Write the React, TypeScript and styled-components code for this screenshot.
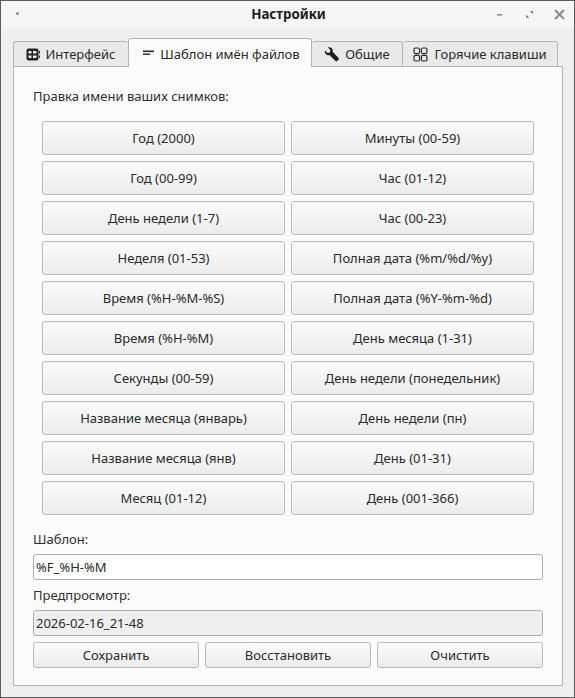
import { FC, ReactNode } from "react";
import styled, { createGlobalStyle } from "styled-components";

const GlobalStyle = createGlobalStyle`
  html, body {
    margin: 0;
    padding: 0;
    background: #efefef;
  }
  * {
    box-sizing: border-box;
  }
`;

const Window = styled.div`
  width: 575px;
  height: 698px;
  display: flex;
  flex-direction: column;
  background: #efefef;
  border: 1px solid #5c5c5c;
  font-family: "Noto Sans", sans-serif;
  font-size: 13px;
  color: #232323;
`;

const TitleBar = styled.div`
  height: 26px;
  flex: none;
  display: grid;
  grid-template-columns: 1fr auto 1fr;
  align-items: center;
  background: #f6f6f6;
  padding: 0 9px 0 12px;
`;

const Title = styled.div`
  font-size: 13.3px;
  font-weight: 700;
  color: #1c1c1c;
  margin-right: 1px;
`;

const MenuDot = styled.div`
  width: 3px;
  height: 3px;
  border-radius: 50%;
  background: #8a8a8a;
  justify-self: start;
  margin-left: 3px;
  margin-bottom: 2px;
`;

const WindowControls = styled.div`
  justify-self: end;
  display: flex;
  align-items: center;
  gap: 20px;
  color: #8c8c8c;
`;

const Body = styled.div`
  flex: 1;
  display: flex;
  flex-direction: column;
  padding: 11px 12px 11px 12px;
  min-height: 0;
`;

const TabBar = styled.div`
  height: 29px;
  flex: none;
  display: flex;
  align-items: flex-end;
  position: relative;
  z-index: 1;
  margin-bottom: -1px;
`;

const Tab = styled.div<{ $active?: boolean; $w: number }>`
  width: ${(p) => p.$w}px;
  height: ${(p) => (p.$active ? 29 : 26)}px;
  display: flex;
  align-items: center;
  justify-content: center;
  gap: 5px;
  white-space: nowrap;
  padding-top: ${(p) => (p.$active ? 1 : 0)}px;
  padding-left: ${(p) => (p.$active ? 2 : 0)}px;
  background: ${(p) => (p.$active ? "#fbfbfb" : "#e9e9e9")};
  border: 1px solid #b4b4b4;
  border-bottom: ${(p) => (p.$active ? "none" : "1px solid #b4b4b4")};
  border-left: ${(p) => (p.$active ? "1px solid #b4b4b4" : "none")};
  border-radius: 3px 3px 0 0;
  color: #2a2a2a;
  &:first-child {
    border-right: none;
    border-left: 1px solid #b4b4b4;
  }
`;

const Pane = styled.div`
  flex: 1;
  width: 550px;
  display: flex;
  flex-direction: column;
  background: #fbfbfb;
  border: 1px solid #b4b4b4;
  padding: 20px 19px 17px 19px;
`;

const Label = styled.div`
  height: 18px;
  line-height: 18px;
  color: #2f2f2f;
`;

const KeyGrid = styled.div`
  display: grid;
  grid-template-columns: 243px 243px;
  grid-auto-rows: 34px;
  column-gap: 6px;
  row-gap: 6px;
  padding-left: 9px;
  margin-top: 16px;
  margin-bottom: 15px;
`;

const Button = styled.button<{ $small?: boolean }>`
  height: ${(p) => (p.$small ? 26 : 34)}px;
  min-width: 0;
  padding: 0;
  font-family: inherit;
  font-size: 13px;
  color: #2a2a2a;
  background: linear-gradient(#fbfbfb, #ececec);
  border: 1px solid #b9b9b9;
  border-radius: 3px;
`;

const TextInput = styled.div<{ $readOnly?: boolean }>`
  height: 26px;
  margin-top: 6px;
  padding-left: 2px;
  display: flex;
  align-items: center;
  background: ${(p) => (p.$readOnly ? "#efefef" : "#ffffff")};
  border: 1px solid #adadad;
  border-radius: 3px;
  color: #2a2a2a;
`;

const PreviewLabel = styled(Label)`
  margin-top: 6px;
`;

const Actions = styled.div`
  display: grid;
  grid-template-columns: repeat(3, 166px);
  column-gap: 6px;
  margin-top: 6px;
`;

const leftKeys = [
  "Год (2000)",
  "Год (00-99)",
  "День недели (1-7)",
  "Неделя (01-53)",
  "Время (%H-%M-%S)",
  "Время (%H-%M)",
  "Секунды (00-59)",
  "Название месяца (январь)",
  "Название месяца (янв)",
  "Месяц (01-12)",
];

const rightKeys = [
  "Минуты (00-59)",
  "Час (01-12)",
  "Час (00-23)",
  "Полная дата (%m/%d/%y)",
  "Полная дата (%Y-%m-%d)",
  "День месяца (1-31)",
  "День недели (понедельник)",
  "День недели (пн)",
  "День (01-31)",
  "День (001-366)",
];

const InterfaceIcon = () => (
  <svg width="14" height="13" viewBox="0 0 14 13">
    <rect x="0.5" y="0.5" width="12" height="12" rx="2" fill="#262626" />
    <rect x="2.500" y="3" width="3" height="2.500" fill="#e9e9e9" />
    <rect x="7" y="3" width="3.500" height="2.500" fill="#e9e9e9" />
    <rect x="2.500" y="7.500" width="3" height="2.500" fill="#e9e9e9" />
    <rect x="7" y="7.500" width="3.500" height="2.500" fill="#e9e9e9" />
    <rect x="13" y="3" width="1" height="2.500" fill="#262626" />
    <rect x="13" y="7.500" width="1" height="2.500" fill="#262626" />
  </svg>
);

const TemplateIcon = () => (
  <svg width="13" height="13" viewBox="0 0 13 13">
    <rect x="1" y="3.500" width="11" height="1.600" fill="#2b2b2b" />
    <rect x="1" y="6.500" width="7" height="1.400" fill="#2b2b2b" />
  </svg>
);

const WrenchIcon = () => (
  <svg width="16" height="15" viewBox="0 0 16 15">
    <path
      d="M1 3.600 3.400 6 5.800 5.400 6.400 3 4 .6C6-.3 8.600 1 8.800 3.400c0 .6 0 1-.2 1.400l5.600 5.600c.8.8.8 1.800.1 2.600l-.7.7c-.8.7-1.800.7-2.600-.1L5.400 8C3 8.900.1 6.500 1 3.600Z"
      fill="#1f1f1f"
    />
  </svg>
);

const HotkeysIcon = () => (
  <svg width="16" height="15" viewBox="0 0 16 15" fill="none" stroke="#2b2b2b" strokeWidth="1.2">
    <rect x="1" y="1" width="5.600" height="5.600" rx="1.500" />
    <rect x="8.400" y="1" width="5.600" height="5.600" rx="1.500" />
    <rect x="1" y="8.400" width="5.600" height="5.600" rx="1.500" />
    <rect x="8.400" y="8.400" width="5.600" height="5.600" rx="1.500" />
  </svg>
);

const MinimizeIcon = () => (
  <svg width="10" height="9" viewBox="0 0 10 9">
    <rect x="2" y="4" width="5" height="1.600" fill="currentColor" />
  </svg>
);

const RestoreIcon = () => (
  <svg width="9" height="9" viewBox="0 0 9 9">
    <path d="M8 1v3.500L4.500 1Z" fill="currentColor" />
    <path d="M1 8V4.500L4.500 8Z" fill="currentColor" />
  </svg>
);

const CloseIcon = () => (
  <svg width="11" height="11" viewBox="0 0 11 11">
    <path d="M1 1l9 9M10 1l-9 9" stroke="currentColor" strokeWidth="2" />
  </svg>
);

interface TabItem {
  title: string;
  width: number;
  icon: ReactNode;
  active?: boolean;
}

const tabs: TabItem[] = [
  { title: "Интерфейс", width: 115, icon: <InterfaceIcon /> },
  { title: "Шаблон имён файлов", width: 184, icon: <TemplateIcon />, active: true },
  { title: "Общие", width: 91, icon: <WrenchIcon /> },
  { title: "Горячие клавиши", width: 155, icon: <HotkeysIcon /> },
];

const App: FC = () => {
  // две колонки идут построчно
  const keys = leftKeys.flatMap((key, i) => [key, rightKeys[i]]);

  return (
    <>
      <GlobalStyle />
      <Window>
        <TitleBar>
          <MenuDot />
          <Title>Настройки</Title>
          <WindowControls>
            <MinimizeIcon />
            <RestoreIcon />
            <CloseIcon />
          </WindowControls>
        </TitleBar>
        <Body>
          <TabBar>
            {tabs.map((tab) => (
              <Tab key={tab.title} $active={tab.active} $w={tab.width}>
                {tab.icon}
                {tab.title}
              </Tab>
            ))}
          </TabBar>
          <Pane>
            <Label>Правка имени ваших снимков:</Label>
            <KeyGrid>
              {keys.map((key) => (
                <Button key={key}>{key}</Button>
              ))}
            </KeyGrid>
            <Label>Шаблон:</Label>
            <TextInput>%F_%H-%M</TextInput>
            <PreviewLabel>Предпросмотр:</PreviewLabel>
            <TextInput $readOnly>2026-02-16_21-48</TextInput>
            <Actions>
              <Button $small>Сохранить</Button>
              <Button $small>Восстановить</Button>
              <Button $small>Очистить</Button>
            </Actions>
          </Pane>
        </Body>
      </Window>
    </>
  );
};

export default App;
